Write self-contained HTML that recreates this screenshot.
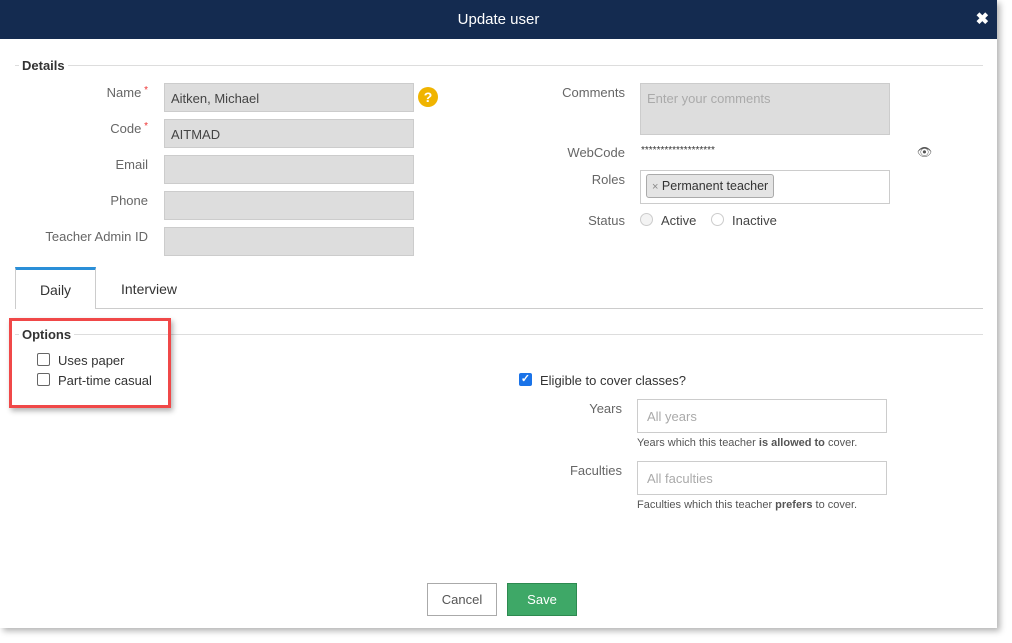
<!DOCTYPE html>
<html><head><meta charset="utf-8"><style>
*{box-sizing:border-box;margin:0;padding:0}
body{width:1012px;height:643px;background:#fff;font-family:"Liberation Sans",sans-serif;position:relative;overflow:hidden;font-size:13px;color:#555}
.dlg{position:absolute;left:0;top:0;width:997px;height:628px;background:#fff;box-shadow:3px 3px 6px rgba(0,0,0,.3)}
.hdr{position:absolute;left:0;top:0;width:997px;height:39px;background:#142b50;color:#fff;font-size:15px;text-align:center;line-height:39px}
.x{position:absolute;right:8px;top:0;font-weight:bold;font-size:16px}
.a{position:absolute}
.lbl{position:absolute;text-align:right;color:#666;font-size:13px}
.in{position:absolute;background:#ddd;border:1px solid #ccc;height:29px;font-size:13px;color:#444;padding:7px 6px}
.wi{position:absolute;background:#fff;border:1px solid #ccc;height:34px;font-size:13px;color:#aaa;padding:9px 9px}
.req{color:#e33;font-size:10px;vertical-align:top}
.line{position:absolute;height:1px;background:#ddd}
.cb{position:absolute;width:13px;height:13px;border:1px solid #666;border-radius:2px;background:#fff}
.rad{position:absolute;width:13px;height:13px;border:1px solid #ccc;border-radius:50%;background:#f3f3f3}
</style></head><body>
<div class="dlg">
<div class="hdr">Update user<span class="x">✖</span></div>
<div class="line" style="left:15px;top:65px;width:968px"></div>
<div class="a" style="left:19px;top:58px;background:#fff;padding:0 3px;font-weight:bold;color:#333;font-size:13px">Details</div>

<div class="lbl" style="left:40px;top:85px;width:108px">Name<span class="req"> *</span></div>
<div class="in" style="left:164px;top:83px;width:250px">Aitken, Michael</div>
<div class="a" style="left:418px;top:87px;width:20px;height:20px;border-radius:50%;background:#f0b400;color:#fff;font-weight:bold;text-align:center;line-height:20px;font-size:14px">?</div>
<div class="lbl" style="left:40px;top:121px;width:108px">Code<span class="req"> *</span></div>
<div class="in" style="left:164px;top:119px;width:250px">AITMAD</div>
<div class="lbl" style="left:40px;top:157px;width:108px">Email</div>
<div class="in" style="left:164px;top:155px;width:250px"></div>
<div class="lbl" style="left:40px;top:193px;width:108px">Phone</div>
<div class="in" style="left:164px;top:191px;width:250px"></div>
<div class="lbl" style="left:20px;top:229px;width:128px">Teacher Admin ID</div>
<div class="in" style="left:164px;top:227px;width:250px"></div>

<div class="lbl" style="left:520px;top:85px;width:105px">Comments</div>
<div class="in" style="left:640px;top:83px;width:250px;height:52px;color:#aaa;font-size:13px">Enter your comments</div>
<div class="lbl" style="left:520px;top:145px;width:105px">WebCode</div>
<div class="a" style="left:641px;top:145px;font-size:10px;color:#333">*******************</div>
<div class="a" style="left:917px;top:145px;font-size:12px;color:#555">👁</div>
<div class="lbl" style="left:520px;top:172px;width:105px">Roles</div>
<div class="a" style="left:640px;top:170px;width:250px;height:34px;border:1px solid #ccc"></div>
<div class="a" style="left:646px;top:174px;height:24px;border:1px solid #aaa;border-radius:3px;background:#e4e4e4;padding:4px 5px;color:#333;font-size:12.5px"><span style="color:#888;font-size:11px">×</span> Permanent teacher</div>
<div class="lbl" style="left:520px;top:213px;width:105px">Status</div>
<div class="rad" style="left:640px;top:213px"></div>
<div class="a" style="left:661px;top:213px;color:#444">Active</div>
<div class="rad" style="left:711px;top:213px;background:#fff"></div>
<div class="a" style="left:732px;top:213px;color:#444">Inactive</div>

<div class="line" style="left:15px;top:308px;width:968px;background:#ccc"></div>
<div class="a" style="left:15px;top:267px;width:81px;height:42px;border:1px solid #ccc;border-bottom:none;border-top:3px solid #2a8fd8;background:#fff;text-align:center;line-height:40px;color:#333;font-size:14px">Daily</div>
<div class="a" style="left:121px;top:281px;color:#333;font-size:14px">Interview</div>

<div class="line" style="left:15px;top:334px;width:968px"></div>
<div class="a" style="left:19px;top:327px;background:#fff;padding:0 3px;font-weight:bold;color:#333;font-size:13px">Options</div>
<div class="cb" style="left:37px;top:353px"></div>
<div class="a" style="left:58px;top:353px;color:#333">Uses paper</div>
<div class="cb" style="left:37px;top:373px"></div>
<div class="a" style="left:58px;top:373px;color:#333">Part-time casual</div>
<div class="a" style="left:9px;top:318px;width:162px;height:90px;border:3px solid #f04848;box-shadow:2px 3px 5px rgba(0,0,0,.3)"></div>

<div class="a" style="left:519px;top:373px;width:13px;height:13px;background:#1a73e8;border-radius:2px;color:#fff;font-size:11px;line-height:13px;text-align:center;font-weight:bold">✓</div>
<div class="a" style="left:540px;top:373px;color:#333">Eligible to cover classes?</div>
<div class="lbl" style="left:540px;top:401px;width:82px">Years</div>
<div class="wi" style="left:637px;top:399px;width:250px">All years</div>
<div class="a" style="left:637px;top:437px;font-size:11px;color:#555">Years which this teacher <b>is allowed to</b> cover.</div>
<div class="lbl" style="left:540px;top:463px;width:82px">Faculties</div>
<div class="wi" style="left:637px;top:461px;width:250px">All faculties</div>
<div class="a" style="left:637px;top:499px;font-size:11px;color:#555">Faculties which this teacher <b>prefers</b> to cover.</div>

<div class="a" style="left:427px;top:583px;width:70px;height:33px;border:1px solid #aaa;text-align:center;line-height:31px;color:#555;font-size:13px">Cancel</div>
<div class="a" style="left:507px;top:583px;width:70px;height:33px;background:#3ea867;border:1px solid #2d8a50;text-align:center;line-height:31px;color:#fff;font-size:13px">Save</div>
</div>
</body></html>
